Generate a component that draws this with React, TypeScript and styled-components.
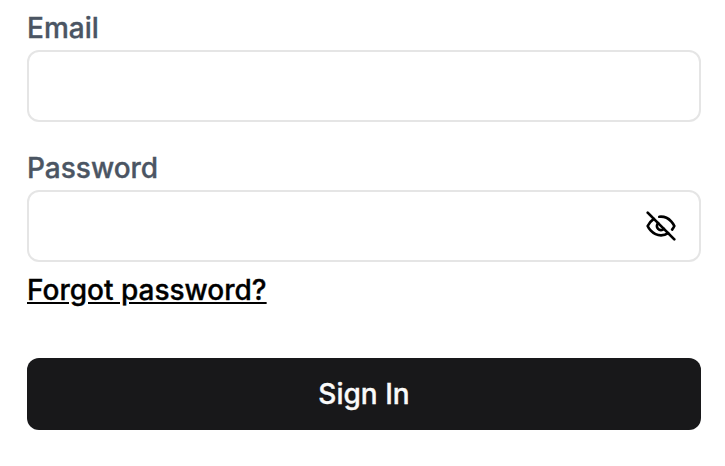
import React from 'react';
import styled, { createGlobalStyle } from 'styled-components';

const GlobalStyle = createGlobalStyle`
  * { box-sizing: border-box; }
  body { margin: 0; background: #fff; font-family: Inter, sans-serif; }
`;
const Form = styled.form`
  display: flex;
  flex-direction: column;
  width: 725px;
  height: 466px;
  padding: 10px 24px 0 27px;
`;
const Label = styled.label`
  height: 40px;
  font-size: 28px;
  line-height: 36px;
  font-weight: 500;
  color: #4b5563;
  -webkit-text-stroke: 0.35px currentColor;
`;
const Field = styled.div`
  display: flex;
  align-items: center;
  height: 72px;
  padding-right: 22px;
  border: 2px solid #e5e5e5;
  border-radius: 12px;
  background: #fff;
`;
const EmailField = styled(Field)`
  margin-bottom: 28px;
`;
const Input = styled.input`
  flex: 1;
  min-width: 0;
  height: 100%;
  padding: 0 20px;
  border: 0;
  outline: 0;
  background: transparent;
  font: 400 28px Inter, sans-serif;
`;
const Toggle = styled.button`
  display: flex;
  padding: 0;
  border: 0;
  background: transparent;
  color: #000;
`;
const EyeOffIcon = styled.svg`
  width: 32px;
  height: 32px;
  fill: none;
  stroke: currentColor;
  stroke-width: 2;
  stroke-linecap: round;
  stroke-linejoin: round;
`;
const ForgotLink = styled.a`
  align-self: flex-start;
  margin-top: 10px;
  height: 36px;
  font-size: 28px;
  line-height: 36px;
  font-weight: 500;
  color: #000;
  text-decoration: underline;
  -webkit-text-stroke: 0.35px currentColor;
`;
const Submit = styled.button`
  height: 72px;
  margin-top: 50px;
  border: 0;
  border-radius: 12px;
  background: #18181a;
  color: #fafafa;
  font: 500 28px Inter, sans-serif;
  -webkit-text-stroke: 0.35px currentColor;
`;

export default function App() {
  return (
    <>
      <GlobalStyle />
      <Form>
        <Label htmlFor="email">Email</Label>
        <EmailField><Input id="email" type="email" /></EmailField>
        <Label htmlFor="password">Password</Label>
        <Field>
          <Input id="password" type="password" />
          <Toggle type="button" aria-label="Show password">
            <EyeOffIcon viewBox="0 0 24 24">
              <path d="M9.88 9.88a3 3 0 1 0 4.24 4.24" />
              <path d="M10.73 5.08A10.43 10.43 0 0 1 12 5c7 0 10 7 10 7a13.16 13.16 0 0 1-1.67 2.68" />
              <path d="M6.61 6.61A13.526 13.526 0 0 0 2 12s3 7 10 7a9.74 9.74 0 0 0 5.39-1.61" />
              <path d="M2 2l20 20" />
            </EyeOffIcon>
          </Toggle>
        </Field>
        <ForgotLink href="#">Forgot password?</ForgotLink>
        <Submit type="button">Sign In</Submit>
      </Form>
    </>
  );
}
